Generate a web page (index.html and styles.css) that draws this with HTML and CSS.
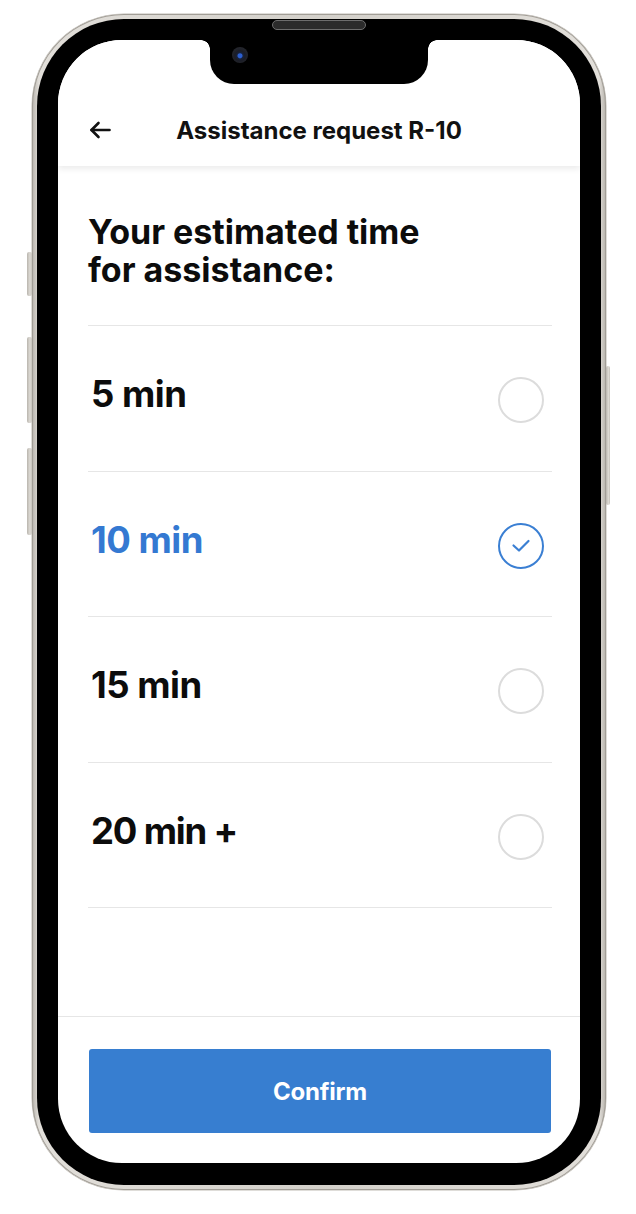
FILE: index.html
```html
<!DOCTYPE html>
<html lang="en">
<head>
<meta charset="utf-8">
<title>Assistance request R-10</title>
<link rel="stylesheet" href="styles.css">
</head>
<body>
<div class="phone">
  <span class="side-btn mute"></span>
  <span class="side-btn vol-up"></span>
  <span class="side-btn vol-down"></span>
  <span class="side-btn power"></span>
  <span class="speaker"></span>
  <div class="bezel">
    <div class="screen">
      <div class="notch"><span class="camera"></span></div>
      <header class="topbar">
        <button class="back" aria-label="Back">
          <svg width="24" height="24" viewBox="0 0 24 24" fill="none" stroke="#111" stroke-width="2.6" stroke-linecap="round" stroke-linejoin="round"><path d="M21.5 12H3.5"/><path d="M10.5 5L3.5 12l7 7"/></svg>
        </button>
        <h1 class="title">Assistance request R-10</h1>
        <span class="spacer"></span>
      </header>
      <main class="content">
        <h2 class="question">Your estimated time<br>for assistance:</h2>
        <ul class="options">
          <li class="option"><span class="label">5 min</span><span class="radio"></span></li>
          <li class="option selected"><span class="label">10 min</span><span class="radio"><svg width="20" height="14" viewBox="0 0 20 14" fill="none" stroke="#3a7fd3" stroke-width="2.2" stroke-linecap="round" stroke-linejoin="round"><path d="M2.5 6.5l5.5 5 9.5-9.5"/></svg></span></li>
          <li class="option"><span class="label">15 min</span><span class="radio"></span></li>
          <li class="option"><span class="label tight">20 min +</span><span class="radio"></span></li>
        </ul>
      </main>
      <footer class="footer">
        <button class="confirm">Confirm</button>
      </footer>
    </div>
  </div>
</div>
</body>
</html>
```
FILE: styles.css
```css
* { box-sizing: border-box; }
html, body { margin: 0; padding: 0; background: #fff; }
body {
  font-family: Inter, "Noto Sans", "Liberation Sans", sans-serif;
  width: 636px;
  height: 1214px;
  overflow: hidden;
}

.phone {
  position: relative;
  width: 574px;
  height: 1176px;
  margin: 14px 0 0 32px;
  border-radius: 92px;
  padding: 5px;
  background: linear-gradient(90deg, #b5b1aa 0%, #e2dfda 1.2%, #d3d0ca 50%, #e2dfda 98.8%, #b5b1aa 100%);
  box-shadow: inset 0 0 0 1px #a29e97, 0 0 0 0.5px #bfbbb4;
}

.side-btn {
  position: absolute;
  background: linear-gradient(90deg, #b9b5ae, #dedbd5 60%, #c6c2bb);
  border-radius: 2px;
}
.side-btn.mute { left: -5px; top: 238px; width: 5px; height: 44px; }
.side-btn.vol-up { left: -5px; top: 323px; width: 5px; height: 86px; }
.side-btn.vol-down { left: -5px; top: 434px; width: 5px; height: 87px; }
.side-btn.power { right: -4px; top: 352px; width: 4px; height: 139px; }

.speaker {
  position: absolute;
  top: 6px;
  left: 240px;
  width: 94px;
  height: 10px;
  border-radius: 5px;
  background: #2b2b2b;
  border: 1px solid #6d6d6d;
  z-index: 2;
}

.bezel {
  height: 100%;
  background: #000;
  border-radius: 87px;
  padding: 21px 21px 22px 21px;
}

.screen {
  position: relative;
  height: 100%;
  background: #fff;
  border-radius: 64px;
  overflow: hidden;
  display: flex;
  flex-direction: column;
}

.notch {
  position: absolute;
  top: 0;
  left: 152px;
  width: 218px;
  height: 44px;
  background: #000;
  border-radius: 0 0 24px 24px;
  z-index: 3;
}
.notch::before, .notch::after {
  content: "";
  position: absolute;
  top: 0;
  width: 9px;
  height: 9px;
}
.notch::before {
  left: -9px;
  background: radial-gradient(circle at 0 100%, transparent 8.5px, #000 9px);
}
.notch::after {
  right: -9px;
  background: radial-gradient(circle at 100% 100%, transparent 8.5px, #000 9px);
}
.camera {
  position: absolute;
  left: 22px;
  top: 7px;
  width: 16px;
  height: 16px;
  border-radius: 50%;
  background: radial-gradient(circle at 50% 55%, #2c5fd0 0 2px, #17223d 3px, #1b1d26 5px, #23252c 8px);
}

.topbar {
  flex: none;
  height: 126px;
  display: flex;
  align-items: center;
  padding: 68px 30px 14px 30px;
  background: #fff;
  box-shadow: 0 3px 6px rgba(0, 0, 0, 0.08);
  position: relative;
  z-index: 1;
}
.back {
  flex: none;
  width: 24px;
  height: 24px;
  padding: 0;
  border: 0;
  background: none;
  display: flex;
}
.title {
  flex: 1;
  margin: 0;
  text-align: center;
  font-size: 24px;
  font-weight: 700;
  letter-spacing: 0;
  color: #111;
}
.spacer { flex: none; width: 24px; }

.content {
  flex: 1;
  padding: 0 28px 0 30px;
}
.question {
  margin: 47px 0 36px 0;
  font-size: 34px;
  line-height: 38px;
  font-weight: 700;
  letter-spacing: 0;
  color: #0c0c0c;
}
.options {
  list-style: none;
  margin: 0;
  padding: 0;
  border-bottom: 1px solid #e6e6e6;
}
.option {
  height: 145.5px;
  border-top: 1px solid #e6e6e6;
  display: flex;
  align-items: center;
  justify-content: space-between;
  padding: 0 8px 0 3px;
}
.label {
  font-size: 36.5px;
  font-weight: 700;
  letter-spacing: -0.5px;
  color: #0c0c0c;
  margin-bottom: 8px;
}
.label.tight { letter-spacing: -1.2px; }
.radio {
  width: 46px;
  height: 46px;
  border-radius: 50%;
  border: 2px solid #dcdcdc;
  margin-top: 4px;
  display: flex;
  align-items: center;
  justify-content: center;
}
.selected .label { color: #3479d2; }
.selected .radio { border-color: #3a7fd3; }
.selected .radio svg { margin-top: 1px; }

.footer {
  flex: none;
  height: 147px;
  border-top: 1px solid #e6e6e6;
  padding: 32px 29px 0 31px;
}
.confirm {
  display: block;
  width: 100%;
  height: 84px;
  border: 0;
  border-radius: 3px;
  background: #377ed0;
  color: #fff;
  font-family: Inter, "Liberation Sans", sans-serif;
  font-size: 24px;
  font-weight: 700;
  letter-spacing: -0.2px;
}
```
